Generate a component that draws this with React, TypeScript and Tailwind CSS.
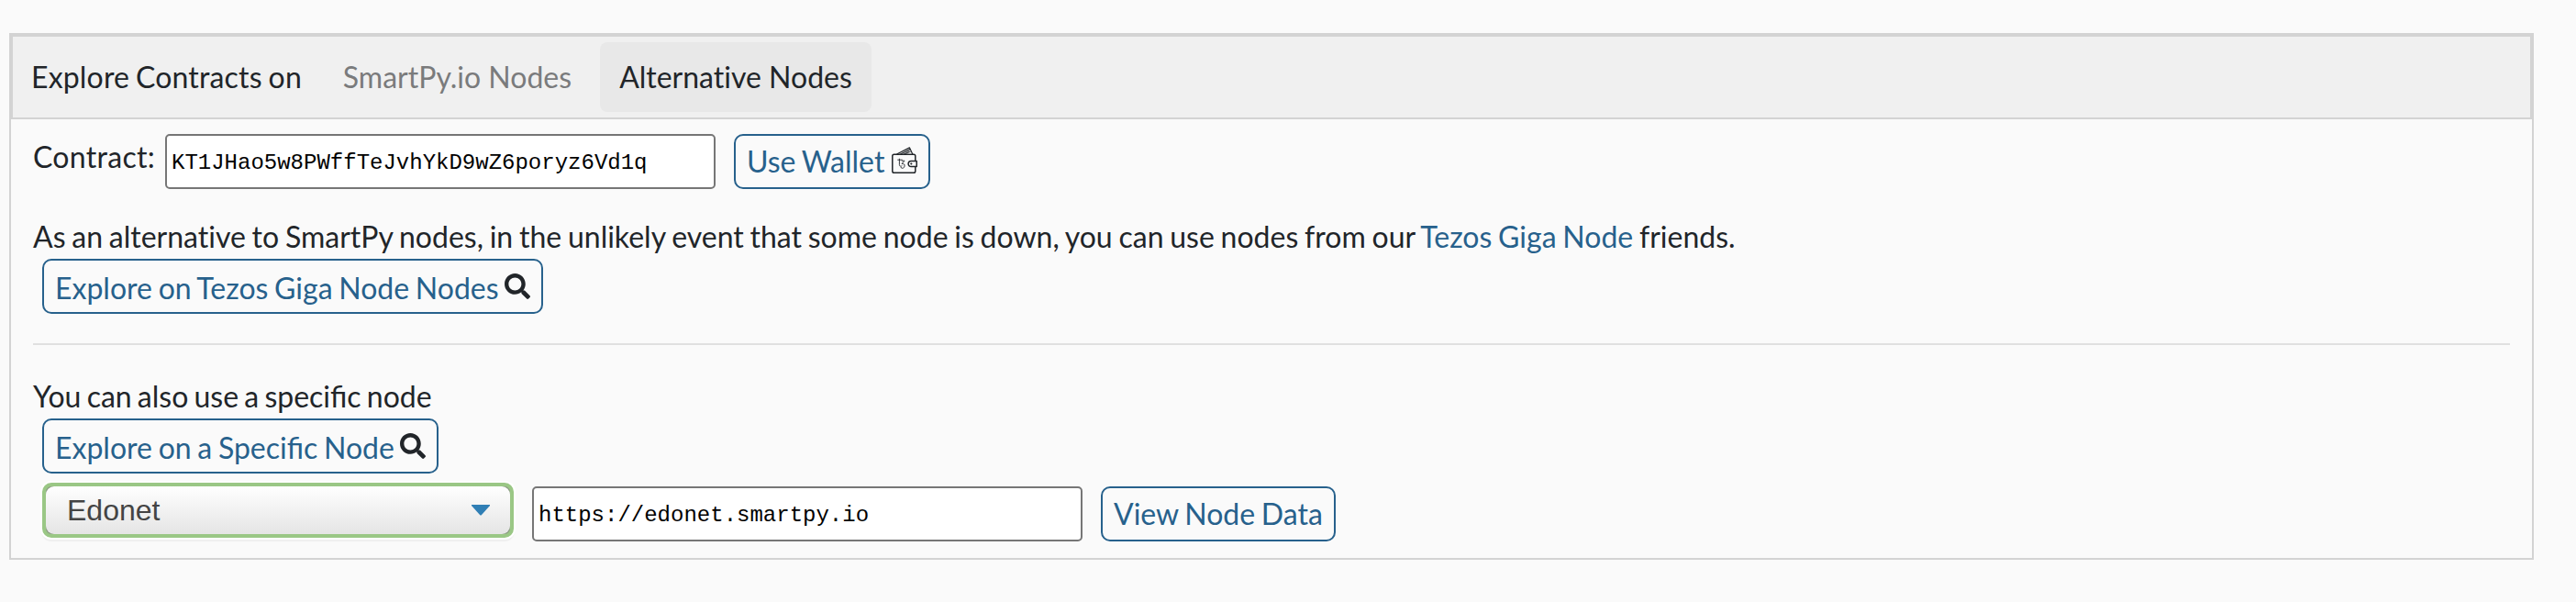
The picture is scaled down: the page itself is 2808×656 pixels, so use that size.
import { FaSearch } from "react-icons/fa";
import type { ReactNode } from "react";

function WalletIcon() {
  return (
    <svg viewBox="0 0 28 29" className="h-[29px] w-7" fill="none" stroke="#212529" strokeWidth="1.5" strokeLinejoin="round">
      <rect x="0.8" y="8.2" width="25" height="20" rx="1.8" />
      <path d="M5.5 8 19.5 0.9 22.8 8M9.5 8 20.4 2.6M13.5 8 21.3 4.4" strokeWidth="1.2" />
      <path d="M27.2 15.4h-6a3.1 3.1 0 0 0 0 6.2h6z" fill="#fafafa" />
      <circle cx="21.3" cy="18.5" r="0.7" fill="#212529" strokeWidth="0.8" />
      <path d="M6.3 14.2h5.4M8.4 12.8v6.8c0 2 2.4 2 3 .8M14 15.2h-3.2M14 15.4l-3 3c2.6-.4 3.3 1 3 2.8-.3 2.4-4 2.8-4 .8" strokeWidth="0.9" />
    </svg>
  );
}

function OutlineButton({ children, className }: { children: ReactNode; className: string }) {
  return (
    <button
      type="button"
      className={`flex h-[60px] shrink-0 items-start whitespace-nowrap rounded-[10px] border-2 border-[#27618c] pl-3 leading-[48px] text-[#27618c] [word-spacing:-1.5px] ${className}`}
    >
      {children}
    </button>
  );
}

function TextInput({ value, label }: { value: string; label: string }) {
  return (
    <input
      aria-label={label}
      defaultValue={value}
      className="h-[60px] w-[600px] shrink-0 rounded-[5px] border-2 border-[#767676] bg-white px-[5px] pt-[3px] font-['Liberation_Mono',monospace] text-2xl text-black"
    />
  );
}

export default function App() {
  return (
    <div className="h-[656px] bg-[#fafafa] pl-2.5 pt-9 font-[Lato,sans-serif] text-[32px] leading-[48px] text-[#212529] [word-spacing:-1.5px]">
      <section className="h-[574px] w-[2752px] border-2 border-[#d3d3d3]">
        <header className="flex h-[92px] items-center border-2 border-[#d3d3d3] bg-[#f0f0f0] pl-5 [font-variant-ligatures:none]">
          <span className="w-80 tracking-[0.17px]">Explore Contracts on</span>
          <nav className="flex gap-3">
            <button type="button" className="h-[76px] w-72 whitespace-nowrap rounded-lg pl-px text-[#7a7b7c]">
              SmartPy.io Nodes
            </button>
            <button type="button" className="h-[76px] w-[296px] whitespace-nowrap rounded-lg bg-[#e8e8e8]">
              Alternative Nodes
            </button>
          </nav>
        </header>

        <div className="px-6 pt-4">
          <div className="flex items-start">
            <label className="w-36 pt-px tracking-[0.3px]">Contract:</label>
            <TextInput label="Contract" value="KT1JHao5w8PWffTeJvhYkD9wZ6poryz6Vd1q" />
            <OutlineButton className="ml-5 w-[214px] pt-1">
              Use Wallet
              <span className="ml-2 mt-2">
                <WalletIcon />
              </span>
            </OutlineButton>
          </div>

          <p className="mt-7 [font-variant-ligatures:none] [word-spacing:-1.43px]">
            As an alternative to SmartPy nodes, in the unlikely event that some node is down, you can use nodes from our{" "}
            <a className="text-[#27618c]">Tezos Giga Node</a> friends.
          </p>
          <OutlineButton className="ml-2.5 w-[546px] pt-1.5">
            Explore on Tezos Giga Node Nodes
            <FaSearch className="ml-1.5 mt-2 size-7 text-[#212529]" />
          </OutlineButton>

          <hr className="mt-8 border-0 border-t-2 border-[#e0e0e0]" />

          <p className="mt-8 [word-spacing:-2px]">You can also use a specific node</p>
          <OutlineButton className="ml-2.5 w-[432px] pt-1.5">
            Explore on a Specific Node
            <FaSearch className="ml-1.5 mt-2 size-7 text-[#212529]" />
          </OutlineButton>

          <div className="ml-2.5 mt-2.5 flex items-start">
            <button
              type="button"
              className="h-[60px] w-[514px] rounded-[10px] border-4 border-[#9ac785] bg-[#8c9c84] font-['Liberation_Sans',sans-serif] text-[#444444] shadow-[0_0_0_2px_#ffffff,0_3px_1px_1px_#efefef]"
            >
              <span className="flex h-[52px] items-center justify-between rounded-[9px] bg-linear-to-b from-white to-[#e5e5e5] pl-[23px] pr-[22px]">
                Edonet
                <svg viewBox="0 0 20 12" className="h-3 w-5" fill="#307fb5">
                  <path d="M0 0h20v1L11 11q-1 1-2 0L0 1z" />
                </svg>
              </span>
            </button>
            <div className="ml-5 mt-1 flex gap-5">
              <TextInput label="Node" value="https://edonet.smartpy.io" />
              <OutlineButton className="w-64 pt-1">View Node Data</OutlineButton>
            </div>
          </div>
        </div>
      </section>
    </div>
  );
}
